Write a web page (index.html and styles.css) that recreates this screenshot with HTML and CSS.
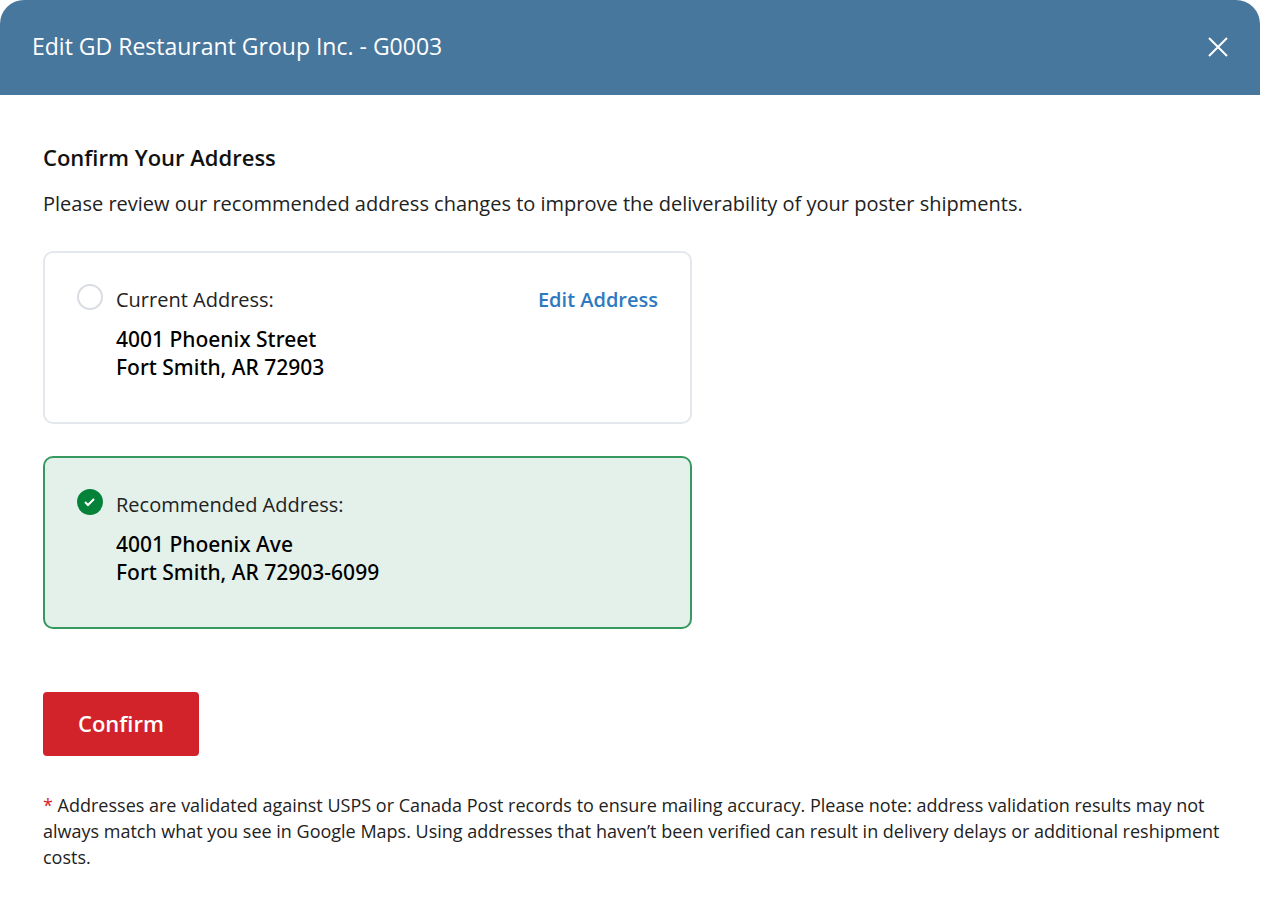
FILE: index.html
```html
<!DOCTYPE html>
<html lang="en">
<head>
    <meta charset="UTF-8">
    <meta name="viewport" content="width=device-width, initial-scale=1.0">
    <title>Confirm Your Address</title>
    <link rel="stylesheet" href="styles.css">
</head>
<body>
    <div class="modal">
        <header class="modal-header">
            <h1>Edit GD Restaurant Group Inc. - G0003</h1>
            <button type="button" class="close" aria-label="Close">
                <svg width="20" height="20" viewBox="0 0 20 20" fill="none" stroke="currentColor" stroke-width="2">
                    <path d="M1 1l18 18M19 1L1 19"/>
                </svg>
            </button>
        </header>
        <form class="modal-body">
            <h2>Confirm Your Address</h2>
            <p class="intro">Please review our recommended address changes to improve the deliverability of your poster shipments.</p>

            <div class="options">
                <div class="option">
                    <input type="radio" name="address" id="current">
                    <div class="option-text">
                        <label for="current">Current Address:</label>
                        <address>4001 Phoenix Street<br>Fort Smith, AR 72903</address>
                    </div>
                    <a href="#" class="edit">Edit Address</a>
                </div>
                <div class="option recommended">
                    <input type="radio" name="address" id="recommended" checked>
                    <div class="option-text">
                        <label for="recommended">Recommended Address:</label>
                        <address>4001 Phoenix Ave<br>Fort Smith, AR 72903-6099</address>
                    </div>
                </div>
            </div>

            <button type="submit" class="confirm">Confirm</button>
            <p class="note"><span class="star">*</span> Addresses are validated against USPS or Canada Post records to ensure mailing accuracy. Please note: address validation results may not always match what you see in Google Maps. Using addresses that haven’t been verified can result in delivery delays or additional reshipment costs.</p>
        </form>
    </div>
</body>
</html>
```
FILE: styles.css
```css
* {
    box-sizing: border-box;
}
body {
    margin: 0;
    font-family: "Open Sans", sans-serif;
    color: #222;
    background-color: #fff;
}
h1, h2, p {
    margin: 0;
}
.modal {
    margin-right: 2px;
}
.modal-header {
    display: flex;
    align-items: center;
    justify-content: space-between;
    padding: 30px 32px 32px;
    background-color: #48779d;
    color: #fff;
    border-radius: 24px 24px 0 0;
}
h1 {
    font-size: 23px;
    font-weight: 400;
    line-height: 33px;
}
.close {
    display: flex;
    padding: 0;
    border: none;
    background: none;
    color: inherit;
    cursor: pointer;
}
.modal-body {
    padding: 46px 32px 44px 43px;
}
h2 {
    font-size: 22px;
    font-weight: 600;
    line-height: 32px;
    color: #111;
}
.intro {
    margin-top: 16px;
    font-size: 20px;
    line-height: 30px;
}
.options {
    display: flex;
    flex-direction: column;
    gap: 32px;
    max-width: 649px;
    margin: 32px 0 63px;
}
.option {
    display: flex;
    align-items: flex-start;
    gap: 13px;
    min-height: 173px;
    padding: 31px 32px;
    border: 2px solid #e4e7ec;
    border-radius: 10px;
}
.option.recommended {
    border-color: #37995f;
    background-color: #e4f1ea;
}
.option input {
    appearance: none;
    flex: none;
    width: 26px;
    height: 26px;
    margin: 0;
    border: 2px solid #d9dce2;
    border-radius: 50%;
    background-color: #fff;
}
.option input:checked {
    border-color: #048239;
    background: #048239 url("data:image/svg+xml,%3Csvg xmlns='http://www.w3.org/2000/svg' viewBox='0 0 22 22' fill='none' stroke='white' stroke-width='2'%3E%3Cpath d='M6 11l3 3 6-6'/%3E%3C/svg%3E") center / 22px no-repeat;
}
.option-text {
    flex: 1;
}
label, .edit {
    font-size: 20px;
    line-height: 32px;
}
address {
    margin-top: 9px;
    font-family: "Noto Sans", "Open Sans", sans-serif;
    font-size: 21px;
    font-style: normal;
    font-weight: 500;
    line-height: 28px;
    color: #000;
}
.edit {
    font-weight: 600;
    color: #2f7abf;
    text-decoration: none;
}
.confirm {
    padding: 15px 35px 17px;
    border: none;
    border-radius: 4px;
    background-color: #d2232a;
    color: #fff;
    font: 600 22px/32px "Open Sans", sans-serif;
    cursor: pointer;
}
.note {
    margin-top: 36px;
    font-size: 18px;
    line-height: 26px;
}
.star {
    color: #e02020;
}
```
